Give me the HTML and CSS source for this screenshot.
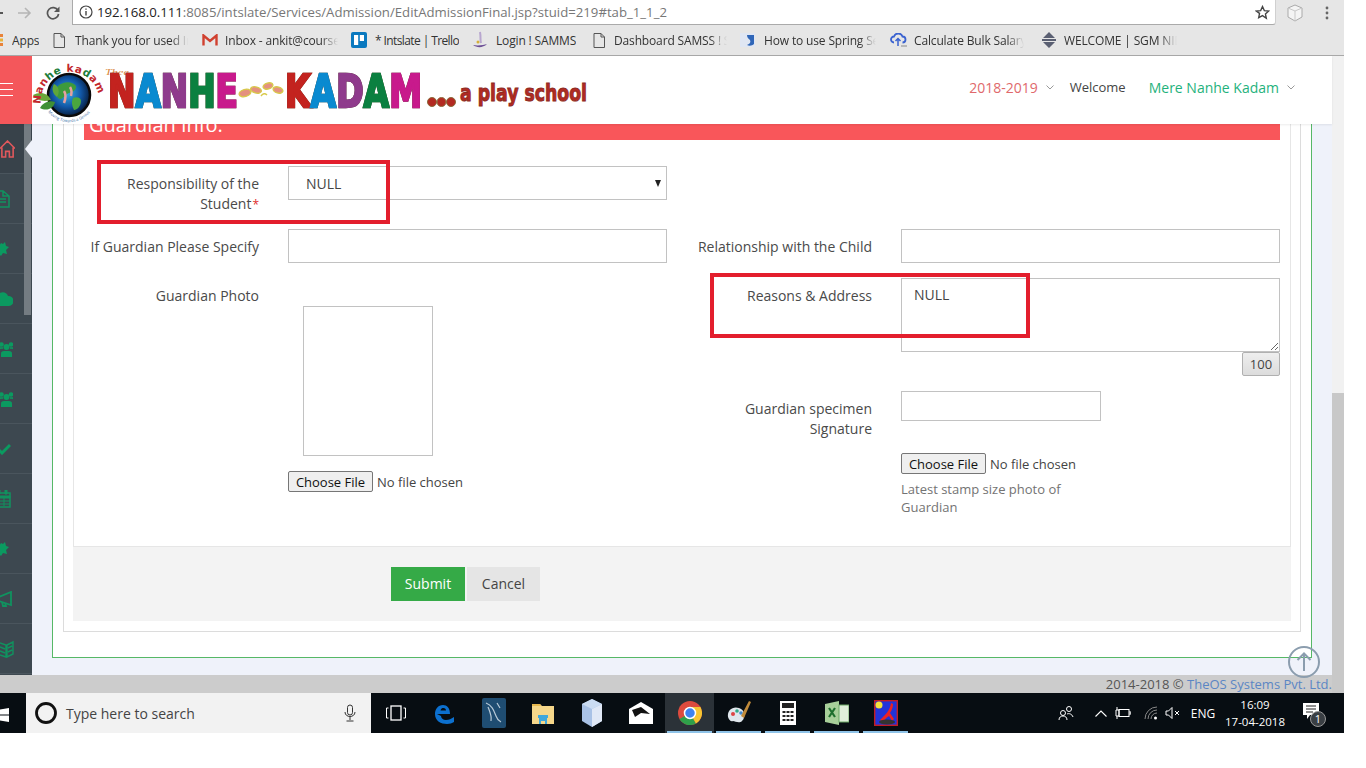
FILE: index.html
```html
<!DOCTYPE html>
<html lang="en">
<head>
<meta charset="utf-8">
<title>Edit Admission</title>
<link rel="stylesheet" href="styles.css">
</head>
<body>
<div class="screen">
  <div class="toolbar">
    <span class="back"></span>
    <svg class="forward" width="14" height="12" viewBox="0 0 14 12"><path d="M0 6h12M7 1l5 5-5 5" fill="none" stroke="#b5b5b5" stroke-width="1.6"/></svg>
    <svg class="reload" width="14" height="14" viewBox="0 0 14 14"><path d="M12 4.5A5.6 5.6 0 1 0 12.6 8" fill="none" stroke="#555" stroke-width="1.7"/><path d="M13.5 0.5v5.5H8z" fill="#555"/></svg>
    <div class="address">
      <svg class="info" width="14" height="14" viewBox="0 0 14 14"><circle cx="7" cy="7" r="6" fill="none" stroke="#444" stroke-width="1.2"/><path d="M7 6v4.4M7 3.4v1.4" stroke="#444" stroke-width="1.4"/></svg>
      <span class="url"><b>192.168.0.111</b>:8085/intslate/Services/Admission/EditAdmissionFinal.jsp?stuid=219#tab_1_1_2</span>
      <svg class="star" width="15" height="15" viewBox="0 0 24 24"><path d="M12 2.5l2.9 6.4 7 .8-5.2 4.7 1.4 6.9L12 17l-6.1 3.3 1.4-6.9L2.1 9.7l7-.8z" fill="none" stroke="#444" stroke-width="2.2"/></svg>
    </div>
    <svg class="ext" width="16" height="18" viewBox="0 0 16 18"><path d="M8 1l7 3v9l-7 4-7-4V4z" fill="#f4f4f4" stroke="#aaa"/><path d="M8 7v10M1 4l7 3 7-3" fill="none" stroke="#c8c8c8"/></svg>
    <svg class="dots" width="4" height="14" viewBox="0 0 4 14"><circle cx="2" cy="2" r="1.4" fill="#666"/><circle cx="2" cy="7" r="1.4" fill="#666"/><circle cx="2" cy="12" r="1.4" fill="#666"/></svg>
  </div>
  <div class="bookmarks">
    <div class="bm bm-apps"><svg width="4" height="12" viewBox="0 0 4 12"><rect y="0" width="3" height="3" fill="#e8833a"/><rect y="4.5" width="3" height="3" fill="#e8b33a"/><rect y="9" width="3" height="3" fill="#e8833a"/></svg><span class="bm-text">Apps</span></div>
    <div class="bm bm-a"><svg width="12" height="15" viewBox="0 0 12 15"><path d="M1 .5h7l3.5 3.5v10.500H1zM8 .5V4h3.500" fill="none" stroke="#555"/></svg><span class="bm-text bm-fade">Thank you for used Ir</span></div>
    <div class="bm bm-b"><svg width="16" height="12" viewBox="0 0 16 12"><path d="M1.500 11.500V1.500L8 7l6.500-5.500v10" fill="none" stroke="#d0402f" stroke-width="2.400"/></svg><span class="bm-text bm-fade">Inbox - ankit@course</span></div>
    <div class="bm bm-c"><svg width="16" height="16" viewBox="0 0 16 16"><rect width="16" height="16" rx="2" fill="#0a79bf"/><rect x="3" y="3" width="4.200" height="10" fill="#fff"/><rect x="8.800" y="3" width="4.200" height="6" fill="#fff"/></svg><span class="bm-text">* Intslate | Trello</span></div>
    <div class="bm bm-d"><svg width="16" height="18" viewBox="0 0 16 18"><path d="M8 1c1 5 0 8 1 11" stroke="#b8a6cf" stroke-width="2" fill="none"/><path d="M1 14c4 3 10 3 14-1-3 1-9 2-14 1z" fill="#6c4f96"/><circle cx="6" cy="11" r="1.500" fill="#d6b03b"/></svg><span class="bm-text">Login ! SAMMS</span></div>
    <div class="bm bm-e"><svg width="12" height="15" viewBox="0 0 12 15"><path d="M1 .5h7l3.5 3.5v10.500H1zM8 .5V4h3.500" fill="none" stroke="#555"/></svg><span class="bm-text bm-fade">Dashboard SAMSS ! S</span></div>
    <div class="bm bm-f"><svg width="16" height="16" viewBox="0 0 16 16"><rect x="0" y="1" width="15" height="14" fill="#dfe6f3"/><path d="M7 3h7v9c-2 2-5 2-7 1 3-1 4-3 3-5-1-1-3-2-3-5z" fill="#2f66b8"/></svg><span class="bm-text bm-fade">How to use Spring Se</span></div>
    <div class="bm bm-g"><svg width="17" height="14" viewBox="0 0 17 14"><path d="M4 9.500a3 3 0 0 1 0-6 4.500 4.500 0 0 1 8.500 0 3 3 0 0 1 0 6" fill="none" stroke="#3a62d0" stroke-width="1.800"/><path d="M8 13V6M5.500 8L8 5.500 10.500 8" fill="none" stroke="#3a62d0" stroke-width="1.500"/><path d="M11 13h6" stroke="#888"/></svg><span class="bm-text bm-fade">Calculate Bulk Salary</span></div>
    <div class="bm bm-h"><svg width="14" height="16" viewBox="0 0 14 16"><path d="M7 0l6 6H1zM7 16l-6-6h12z" fill="#5a5f72"/><rect x="0" y="7" width="14" height="2" fill="#5a5f72"/></svg><span class="bm-text bm-fade">WELCOME | SGM NID</span></div>
  </div>

  <div class="app">
    <div class="app-col">
      <header class="topbar">
        <div class="burger"><i></i><i></i><i></i></div>
        <svg class="logo" width="570" height="68" viewBox="0 0 570 68">
          <defs>
            <radialGradient id="globe" cx="45%" cy="45%" r="60%"><stop offset="0" stop-color="#37b0e0"/><stop offset=".55" stop-color="#1258a8"/><stop offset="1" stop-color="#04142e"/></radialGradient>
            <path id="arcTop" d="M9 48A29 29 0 0 1 67 42"/>
            <path id="arcBottom" d="M16 56a27 27 0 0 0 43 -1"/>
          </defs>
          <g transform="translate(0 3)">
            <circle cx="37" cy="36" r="21" fill="url(#globe)" stroke="#0a0a0a" stroke-width="2.500"/>
            <path d="M26 27c6-5 14-5 18 0 1 5-5 6-9 8-4 3-6 7-9 4-3-4-3-8 0-12z" fill="#3d9a3c"/>
            <path d="M41 39c4-2 8 0 8 3 0 5-4 9-7 9-2-4-3-8-1-12z" fill="#4aa63f"/>
            <path d="M32 32c2 3 2 7 0 12M38 28c2 3 2 5 1 9" stroke="#e6a0a0" stroke-width="2.500" fill="none"/>
            <path d="M1 36c7-4 15-2 18 5-7 2-14 1-18-5z" fill="#6aa83a"/>
            <path d="M8 49c3-6 10-8 15-6-1 6-8 10-15 6z" fill="#3f8f35"/>
            <path d="M22 25c5 2 6 8 3 13-4-3-6-8-3-13z" fill="#5fa63a"/>
          </g>
          <text class="arc-text"><textPath href="#arcTop"><tspan fill="#c2272d">Nan</tspan><tspan fill="#1d7d3a">he </tspan><tspan fill="#c2272d">ka</tspan><tspan fill="#1d7d3a">d</tspan><tspan fill="#c2272d">am</tspan></textPath></text>
          <text class="arc-small"><textPath href="#arcBottom">Moving Towards a Genius World</textPath></text>
          <text class="the" x="73" y="19" textLength="24" lengthAdjust="spacingAndGlyphs">Thee</text>
          <text class="big" y="51" textLength="130" lengthAdjust="spacingAndGlyphs" x="76"><tspan fill="#c3231f" stroke="#c3231f">N</tspan><tspan fill="#0a8ad0" stroke="#0a8ad0">A</tspan><tspan fill="#8f3b8c" stroke="#8f3b8c">N</tspan><tspan fill="#0b8040" stroke="#0b8040">H</tspan><tspan fill="#c81a8c" stroke="#c81a8c">E</tspan></text>
          <g fill="#e4917f" stroke="#d8c94a" stroke-width="1.400">
            <ellipse cx="213" cy="37" rx="6" ry="3.500" transform="rotate(-15 213 37)"/>
            <ellipse cx="224" cy="34" rx="5.500" ry="3" transform="rotate(15 224 34)"/>
            <path d="M229 40q3-4 6-1" fill="none"/>
            <ellipse cx="236" cy="30" rx="5" ry="3" transform="rotate(-15 236 30)"/>
            <ellipse cx="246" cy="34" rx="5" ry="3" transform="rotate(15 246 34)"/>
          </g>
          <text class="big" y="51" textLength="137" lengthAdjust="spacingAndGlyphs" x="253"><tspan fill="#c3231f" stroke="#c3231f">K</tspan><tspan fill="#0a8ad0" stroke="#0a8ad0">A</tspan><tspan fill="#8f3b8c" stroke="#8f3b8c">D</tspan><tspan fill="#0b8040" stroke="#0b8040">A</tspan><tspan fill="#c81a8c" stroke="#c81a8c">M</tspan></text>
          <g fill="#b32a22" stroke="#8d6a3a"><circle cx="400" cy="46" r="4.500"/><circle cx="409.500" cy="46" r="4.500"/><circle cx="419" cy="46" r="4.500"/></g>
          <text class="tag" x="428" y="45" textLength="127" lengthAdjust="spacingAndGlyphs">a play school</text>
        </svg>
        <nav class="topnav">
          <span class="nav-year">2018-2019</span>
          <svg class="chev" width="8" height="5" viewBox="0 0 8 5"><path d="M.5.5L4 4 7.500.5" fill="none" stroke="#999"/></svg>
          <span class="nav-welcome">Welcome</span>
          <span class="nav-user">Mere Nanhe Kadam</span>
          <svg class="chev" width="8" height="5" viewBox="0 0 8 5"><path d="M.5.5L4 4 7.500.5" fill="none" stroke="#999"/></svg>
        </nav>
      </header>

      <div class="body-row">
        <aside class="sidebar">
          <div class="side-item active"><svg width="15" height="18" viewBox="1 1 16 19"><path d="M1 10L9 2l8 8M3 9v10h4v-6h4v6h4V9" fill="none" stroke="#e0585c" stroke-width="1.700"/></svg></div>
          <div class="side-item"><svg width="10" height="18" viewBox="8 0 10 18"><path d="M1 1h10l6 5v11H1zM11 1v5h6M5 9h9M5 12h9" fill="none" stroke="#10925f" stroke-width="1.500"/></svg></div>
          <div class="side-item"><svg width="9" height="16" viewBox="9 0 9 16"><path d="M8 5l2-3 2 1 2-2 1 4 3 1-3 3 1 4-4-1-2 3-2-2-3 1V6z" fill="#0b9a60"/></svg></div>
          <div class="side-item"><svg width="13" height="14" viewBox="7 0 13 14"><path d="M4 14a4 4 0 0 1-.5-8A6 6 0 0 1 15 4a5 5 0 0 1 1 10z" fill="#0b9a60"/></svg></div>
          <div class="side-item"><svg width="13" height="16" viewBox="0 0 13 16"><circle cx="6.500" cy="6" r="3" fill="#0b9a60"/><circle cx="11" cy="3.500" r="2.300" fill="#0b9a60"/><circle cx="1.500" cy="3.500" r="2.300" fill="#0b9a60"/><path d="M1 16v-3.500Q1 10 4 10h5q3 0 3 2.500V16z" fill="#0b9a60"/><path d="M-1 11v-2q0-2 2-2h2M14 11V9q0-2-2-2h-2" stroke="#0b9a60" stroke-width="1.500" fill="none"/></svg></div>
          <div class="side-item"><svg width="13" height="16" viewBox="0 0 13 16"><circle cx="6.500" cy="6" r="3" fill="#0b9a60"/><circle cx="11" cy="3.500" r="2.300" fill="#0b9a60"/><circle cx="1.500" cy="3.500" r="2.300" fill="#0b9a60"/><path d="M1 16v-3.500Q1 10 4 10h5q3 0 3 2.500V16z" fill="#0b9a60"/><path d="M-1 11v-2q0-2 2-2h2M14 11V9q0-2-2-2h-2" stroke="#0b9a60" stroke-width="1.500" fill="none"/></svg></div>
          <div class="side-item"><svg width="11" height="12" viewBox="0 0 11 12"><path d="M-2 6l4 4 8-8" fill="none" stroke="#0b9a60" stroke-width="3"/></svg></div>
          <div class="side-item"><svg width="11" height="18" viewBox="7 0 11 18"><rect x="1" y="3" width="16" height="14" fill="none" stroke="#10925f" stroke-width="1.500"/><path d="M1 6h16v2H1zM5 0h2v4H5zM12 0h2v4h-2zM1 11h16M1 14h16M6 8v8M11 8v8" fill="#10925f" stroke="#10925f"/></svg></div>
          <div class="side-item"><svg width="9" height="16" viewBox="9 0 9 16"><path d="M8 5l2-3 2 1 2-2 1 4 3 1-3 3 1 4-4-1-2 3-2-2-3 1V6z" fill="#0b9a60"/></svg></div>
          <div class="side-item"><svg width="12" height="16" viewBox="6 0 12 16"><path d="M5 6l12-5v13L5 10zM8 11l1 4h3l-1-3" fill="none" stroke="#10925f" stroke-width="1.800"/></svg></div>
          <div class="side-item"><svg width="14" height="18" viewBox="0 0 14 18"><path d="M0 3l6 2v12l-6-2M7 5l6-3v12l-6 3zM0 7l5 2M0 11l5 2M8 8l4-2M8 12l4-2" fill="none" stroke="#10925f" stroke-width="1.400"/></svg></div>
          <span class="side-scroll"></span>
          <span class="side-arrow"></span>
        </aside>

        <main class="main">
          <div class="green-box">
            <div class="gray-box">
              <div class="panel">
                <form class="form-area">
                  <h2 class="section-title">Guardian Info.</h2>
                  <div class="form-grid">
                    <div class="field">
                      <label class="label">Responsibility of the Student<em>*</em></label>
                      <div class="select-wrap">
                        <select class="control control-select"><option>NULL</option></select>
                      </div>
                    </div>
                    <div class="field"></div>
                    <div class="field">
                      <label class="label">If Guardian Please Specify</label>
                      <input class="control" type="text">
                    </div>
                    <div class="field">
                      <label class="label">Relationship with the Child</label>
                      <input class="control" type="text">
                    </div>
                    <div class="field field-last">
                      <label class="label">Guardian Photo</label>
                      <div class="photo-col">
                        <div class="photo-box"></div>
                        <input class="file" type="file">
                      </div>
                    </div>
                    <div class="right-stack">
                      <div class="field">
                        <label class="label">Reasons &amp; Address</label>
                        <div class="area-col">
                          <textarea class="control area">NULL</textarea>
                          <span class="counter">100</span>
                        </div>
                      </div>
                      <div class="field field-sign">
                        <label class="label">Guardian specimen Signature</label>
                        <input class="control control-sign" type="text">
                      </div>
                      <div class="field field-last">
                        <span class="label"></span>
                        <div class="sign-col">
                          <input class="file" type="file">
                          <p class="help">Latest stamp size photo of Guardian</p>
                        </div>
                      </div>
                    </div>
                  </div>
                </form>
                <div class="actions">
                  <button class="btn btn-submit" type="button">Submit</button>
                  <button class="btn btn-cancel" type="button">Cancel</button>
                </div>
              </div>
            </div>
          </div>
        </main>
      </div>

      <footer class="copy">2014-2018 © <a>TheOS Systems Pvt. Ltd.</a></footer>
    </div>
    <div class="page-scroll"><span class="page-thumb"></span></div>
    <span class="mark mark-one"></span>
    <span class="mark mark-two"></span>
    <svg class="to-top" width="34" height="34" viewBox="0 0 34 34"><circle cx="17" cy="17" r="15" fill="none" stroke="#8b9dae" stroke-width="2"/><path d="M17 26V9M10.500 15L17 8.500 23.500 15" fill="none" stroke="#8b9dae" stroke-width="2"/></svg>
  </div>

  <div class="taskbar">
    <svg class="win" width="10" height="14" viewBox="0 0 10 14"><path d="M0 1.500L9 0v6.500H0zM0 7.500h9V14L0 12.500z" fill="#fff"/></svg>
    <div class="search">
      <svg class="cortana" width="22" height="22" viewBox="0 0 22 22"><circle cx="11" cy="11" r="9.500" fill="none" stroke="#111" stroke-width="2.800"/></svg>
      <span class="search-text">Type here to search</span>
      <svg class="mic" width="12" height="18" viewBox="0 0 12 18"><rect x="3.500" y="1" width="5" height="10" rx="2.500" fill="none" stroke="#333"/><path d="M1 8c0 6 10 6 10 0M6 13v3M2.500 17h7" fill="none" stroke="#333"/></svg>
    </div>
    <div class="apps">
      <div class="tb"><svg width="20" height="16" viewBox="0 0 20 16"><rect x="5" y="1" width="10" height="14" fill="none" stroke="#fff" stroke-width="1.300"/><path d="M2.500 3H.5v10h2M17.500 3h2v10h-2" fill="none" stroke="#fff"/></svg></div>
      <div class="tb"><svg width="21" height="24" viewBox="0 0 21 24"><path d="M3 13h13c0-6-3-9-7-9C4 4 1 8 1 13c0 7 6 10 12 10 3 0 5-1 7-2v-5c-3 2-5 3-8 3-3 0-5-2-5-4zM6.500 9.500C7 7.500 8 7 9.500 7s2.500 1 2.500 2.500z" fill="#0c70cf" fill-rule="evenodd"/></svg></div>
      <div class="tb"><svg width="24" height="30" viewBox="0 0 24 30"><rect width="24" height="30" rx="2" fill="#1f4d72"/><path d="M4 5c6 2 8 8 10 13 1 3 3 5 5 6M6 9c2 5 4 9 3 14M15 5l3 5" fill="none" stroke="#b8cad8" stroke-width="1.200"/></svg></div>
      <div class="tb"><svg width="22" height="24" viewBox="0 0 22 24"><path d="M0 3h8l2 2h12v18H0z" fill="#f5d78a"/><path d="M0 3h8l1 2H0z" fill="#e6b84f"/><path d="M7 16h8v7h-2v-3H9v3H7z" fill="#3fa7dc"/><rect x="6" y="14" width="10" height="3" fill="#3fa7dc"/></svg></div>
      <div class="tb"><svg width="22" height="28" viewBox="0 0 22 28"><path d="M11 0l10 5v17l-10 6-10-6V5z" fill="#a9c2e6"/><path d="M11 10v18l10-6V5z" fill="#e0e8f6"/><path d="M1 5l10-5 10 5-10 5z" fill="#cbdcf2"/></svg></div>
      <div class="tb"><svg width="24" height="22" viewBox="0 0 24 22"><path d="M0 7L12 0l12 7v15H0z" fill="#fff"/><path d="M3 8l9-3 9 7-9-1-6 4z" fill="#111"/></svg></div>
      <div class="tb tb-active tb-run"><svg width="24" height="24" viewBox="0 0 24 24"><circle cx="12" cy="12" r="12" fill="#dd4b3e"/><path d="M12 12L1.500 18A12 12 0 0 0 18 22.400z" fill="#2fa04a"/><path d="M12 12l6 10.400A12 12 0 0 0 22.400 6H12z" fill="#f7c532"/><circle cx="12" cy="12" r="5.500" fill="#3f83ef" stroke="#fff" stroke-width="1.500"/></svg></div>
      <div class="tb tb-run"><svg width="26" height="28" viewBox="0 0 26 28"><path d="M2 18C1 11 7 7 13 9c6 2 7 9 3 13-3 3-7 0-9 0-2 1-4-1-5-4z" fill="#dfe6ec"/><circle cx="7" cy="15" r="2" fill="#d44"/><circle cx="11" cy="12" r="1.800" fill="#3a8"/><circle cx="15" cy="14" r="1.800" fill="#48c"/><path d="M15 17L23 2l2 1-7 16z" fill="#c08a3a"/></svg></div>
      <div class="tb tb-run"><svg width="16" height="24" viewBox="0 0 16 24"><rect width="16" height="24" fill="#fff"/><rect x="2" y="2" width="12" height="5" fill="#222"/><path d="M2.500 10h3v2h-3zM6.500 10h3v2h-3zM10.500 10h3v2h-3zM2.500 14h3v2h-3zM6.500 14h3v2h-3zM10.500 14h3v2h-3zM2.500 18h3v2h-3zM6.500 18h3v2h-3zM10.500 18h3v2h-3z" fill="#222"/></svg></div>
      <div class="tb tb-run"><svg width="24" height="24" viewBox="0 0 24 24"><path d="M0 3l14-3v24L0 21z" fill="#a8cf9a"/><rect x="14" y="4" width="10" height="17" fill="#dfeeda" stroke="#6aa864"/><path d="M4 7l6 9M10 7l-6 9" stroke="#1e6f2e" stroke-width="2.200"/></svg></div>
      <div class="tb tb-run"><svg width="24" height="26" viewBox="0 0 24 26"><rect x=".7" y=".7" width="22.600" height="24.600" fill="#2233d8" stroke="#c21c22" stroke-width="1.400"/><circle cx="5" cy="5" r="3.500" fill="#f5e03a"/><path d="M17 3c-1 8-6 12-11 17l3 2c2-3 4-5 6-6l3 5 2-2-4-6c2-3 3-6 3-9z" fill="#e22"/><ellipse cx="13" cy="22" rx="8" ry="2.500" fill="#333"/></svg></div>
    </div>
    <div class="tray">
      <svg class="t-people" width="16" height="16" viewBox="0 0 16 16"><circle cx="5" cy="8" r="2.500" fill="none" stroke="#fff"/><path d="M1 15c0-3 2-4 4-4s4 1 4 4" fill="none" stroke="#fff"/><circle cx="11" cy="4" r="2.500" fill="none" stroke="#fff"/><path d="M9 9c2-1 5 0 6 3" fill="none" stroke="#fff"/></svg>
      <svg class="t-up" width="12" height="7" viewBox="0 0 12 7"><path d="M.5 6.500L6 1l5.500 5.500" fill="none" stroke="#fff" stroke-width="1.100"/></svg>
      <svg class="t-batt" width="16" height="12" viewBox="0 0 16 12"><rect x="4" y="2.500" width="10" height="7" fill="none" stroke="#fff"/><path d="M14 5h2v2h-2M1 3h3v6H1zM2 0v3M2 9v3" fill="none" stroke="#fff"/></svg>
      <svg class="t-wifi" width="14" height="14" viewBox="0 0 14 14"><path d="M1 13A12 12 0 0 1 13 1M4 13a9 9 0 0 1 9-9M7 13a6 6 0 0 1 6-6" fill="none" stroke="#888"/><circle cx="11.500" cy="12" r="1.500" fill="#fff"/></svg>
      <svg class="t-vol" width="16" height="14" viewBox="0 0 16 14"><path d="M1 5h2.500L7 1.500v11L3.500 9H1z" fill="none" stroke="#fff"/><path d="M10 5l4 4M14 5l-4 4" stroke="#fff"/></svg>
      <span class="t-eng">ENG</span>
      <div class="t-clock"><span>16:09</span><span>17-04-2018</span></div>
      <div class="t-note">
        <svg width="16" height="16" viewBox="0 0 16 16"><path d="M0 0h16v12H7l-3 4v-4H0z" fill="#fff"/><path d="M3 3h10M3 6h10M3 9h7" stroke="#222"/></svg>
        <span class="note-badge">1</span>
      </div>
    </div>
  </div>
</div>
</body>
</html>
```
FILE: styles.css
```css
* { box-sizing: border-box; }
html, body { margin: 0; padding: 0; background: #fff; }
body { width: 1366px; height: 768px; overflow: hidden; font-family: "Open Sans", sans-serif; font-size: 14px; color: #444; }

.screen { width: 1344px; height: 733px; display: flex; flex-direction: column; }

/* browser chrome */
.toolbar { height: 25px; background: #e6e6e6; display: flex; align-items: center; flex: none; }
.back { width: 3px; height: 2px; background: #555; flex: none; }
.forward { margin-left: 15px; flex: none; }
.reload { margin-left: 14px; flex: none; }
.address { margin-left: 12px; width: 1204px; height: 25px; background: #fff; border-left: 1px solid #aaa; border-bottom: 1px solid #aaa; border-right: 1px solid #d0d0d0; border-bottom-right-radius: 3px; display: flex; align-items: center; flex: none; }
.info { margin-left: 6px; flex: none; }
.url { margin-left: 4px; font-size: 13.200px; color: #777; white-space: nowrap; }
.url b { font-weight: 400; color: #222; }
.star { margin-left: auto; margin-right: 5px; }
.ext { margin-left: 11px; flex: none; }
.dots { margin-left: 22px; flex: none; }

.bookmarks { height: 31px; background: #e6e6e6; border-bottom: 1px solid #a8a8a8; display: flex; align-items: center; flex: none; }
.bm { display: flex; align-items: center; flex: none; height: 100%; }
.bm svg { flex: none; }
.bm-text { font-size: 12px; letter-spacing: -.15px; color: #333; white-space: nowrap; overflow: hidden; display: block; }
.bm-fade { -webkit-mask-image: linear-gradient(90deg, #000 85%, transparent); mask-image: linear-gradient(90deg, #000 85%, transparent); }
.bm-apps { width: 53px; }
.bm-apps svg { margin-right: 8px; }
.bm-a { width: 149px; }
.bm-a svg { margin-right: 10px; }
.bm-a .bm-text { width: 113px; }
.bm-b { width: 149px; }
.bm-b svg { margin-right: 7px; }
.bm-b .bm-text { width: 113px; }
.bm-c { width: 121px; }
.bm-c svg { margin-right: 8px; }
.bm-c .bm-text { letter-spacing: -.6px; }
.bm-d { width: 121px; }
.bm-d svg { margin-right: 8px; }
.bm-e { width: 147px; }
.bm-e svg { margin-right: 9px; }
.bm-e .bm-text { width: 113px; }
.bm-f { width: 150px; }
.bm-f svg { margin-right: 8px; }
.bm-f .bm-text { width: 112px; }
.bm-g { width: 152px; }
.bm-g svg { margin-right: 7px; }
.bm-g .bm-text { width: 110px; }
.bm-h svg { margin-right: 8px; }
.bm-h .bm-text { width: 113px; }

/* app */
.app { flex: 1; display: flex; position: relative; min-height: 0; }
.app-col { width: 1332px; display: flex; flex-direction: column; background: #ccc; }
.topbar { height: 68px; flex: none; background: #fff; display: flex; align-items: center; position: relative; z-index: 2; box-shadow: 0 1px 2px rgba(0,0,0,.08); }
.burger { width: 32px; height: 68px; background: #f4575b; display: flex; flex-direction: column; gap: 5px; padding-top: 27px; flex: none; }
.burger i { display: block; width: 13px; height: 1px; background: #fff; }
.logo { flex: none; }
.arc-text { font: 700 10.500px "DejaVu Sans", sans-serif; letter-spacing: .6px; }
.arc-small { font: 400 4px "Open Sans", sans-serif; fill: #3a6ea8; }
.the { font: italic 400 9px "Liberation Serif", serif; fill: #d8853a; }
.big { font: 700 44px "DejaVu Sans", sans-serif; stroke-width: 2.400; filter: drop-shadow(0 0 .6px #4b3a20); }
.tag { font: 700 23px "DejaVu Sans", sans-serif; fill: #b32a22; stroke: #8d2a22; stroke-width: 1; }
.topnav { margin-left: auto; padding-right: 37px; padding-bottom: 6px; display: flex; align-items: center; font-size: 14px; white-space: nowrap; }
.nav-year { color: #e0696c; }
.chev { margin-left: 8px; flex: none; }
.nav-welcome { margin-left: 16px; font-size: 13px; color: #444; }
.nav-user { margin-left: 23px; color: #1fb27c; }

.body-row { height: 551px; flex: none; display: flex; }
.sidebar { width: 32px; flex: none; background: #3d4850; position: relative; overflow: hidden; }
.side-item { height: 50px; display: flex; align-items: center; border-bottom: 1px solid #4a555d; overflow: hidden; }
.side-item.active { background: #38424a; }
.side-scroll { position: absolute; left: 24px; top: 0; width: 7px; height: 191px; background: #747c82; }
.side-arrow { position: absolute; right: 0; top: 16px; width: 0; height: 0; border-top: 9px solid transparent; border-bottom: 9px solid transparent; border-right: 7px solid #eff2fa; }

.main { flex: 1; background: #eff2fa; padding: 0 21px 17px 20px; min-width: 0; overflow: hidden; display: flex; }
.green-box { flex: 1; background: #fff; border: 1px solid #56b866; border-top: 0; padding: 0 10px 25px; display: flex; }
.gray-box { flex: 1; border: 1px solid #dcdcdc; border-top: 0; padding: 0 9px 10px; display: flex; }
.panel { flex: 1; display: flex; flex-direction: column; }
.form-area { flex: 1; border: 1px solid #e6e6e6; border-top: 0; padding: 0 10px; background: #fff; }
.section-title { margin: -24px 0 26px; height: 40px; padding: 0 5px 5px; background: #f9565a; color: #fff; font-size: 20px; font-weight: 400; line-height: 20px; display: flex; align-items: flex-end; }
.form-grid { display: grid; grid-template-columns: 583px 583px; column-gap: 30px; align-items: start; }
.field { display: flex; align-items: flex-start; gap: 29px; margin-bottom: 15px; }
.field-last { margin-bottom: 0; }
.label { width: 175px; flex: none; padding-top: 8px; text-align: right; line-height: 20px; font-size: 14px; color: #4a4a4a; }
.label em { color: #e02b2b; font-size: 12px; line-height: 1; font-style: normal; margin-left: 1px; }
.control { display: block; width: 379px; height: 34px; padding: 6px 17px; border: 1px solid #c2c2c2; background: #fff; font: 14px "Open Sans", sans-serif; color: #444; border-radius: 0; outline: 0; flex: none; }
.select-wrap { position: relative; flex: none; }
.select-wrap::after { content: ""; position: absolute; right: 6px; top: 14px; border-left: 3.500px solid transparent; border-right: 3.500px solid transparent; border-top: 7px solid #222; }
.control-select { appearance: none; -webkit-appearance: none; padding-left: 17px; }
.right-stack { display: flex; flex-direction: column; }
.area-col { display: flex; flex-direction: column; align-items: flex-end; flex: none; }
.area { height: 74px; padding: 6px 12px; resize: vertical; }
.counter { width: 38px; height: 24px; line-height: 22px; text-align: center; font-size: 13px; color: #444; background: linear-gradient(#eee, #dcdcdc); border: 1px solid #b0b0b0; border-radius: 2px; }
.field-sign { margin-bottom: 14px; }
.control-sign { width: 200px; height: 30px; }
.photo-col { display: flex; flex-direction: column; }
.photo-box { width: 130px; height: 150px; margin: 28px 0 15px 15px; border: 1px solid #c2c2c2; }
.file { display: block; width: 260px; height: 21px; font: 13px "Open Sans", sans-serif; color: #444; }
.file::file-selector-button { width: 85px; height: 21px; margin-right: 4px; padding: 0; font: 13px "Open Sans", sans-serif; color: #111; background: #efefef; border: 1px solid #767676; border-radius: 2px; }
.help { margin: 6px 0 0; width: 200px; font-size: 13px; line-height: 18px; color: #737373; }
.actions { height: 74px; flex: none; background: #f3f3f3; padding: 20px 0 20px 318px; display: flex; gap: 2px; }
.btn { height: 34px; border: 0; font: 14px "Open Sans", sans-serif; padding: 0 0 2px; }
.btn-submit { width: 74px; background: #35aa47; color: #fff; }
.btn-cancel { width: 73px; background: #e5e5e5; color: #444; }

.copy { flex: 1; text-align: right; font-size: 13px; line-height: 18px; color: #555; }
.copy a { color: #5b86c4; }

.page-scroll { width: 12px; background: #f1f1f1; display: flex; flex-direction: column; justify-content: flex-end; }
.page-thumb { display: block; height: 300px; background: #c8c8c8; }

.mark { position: absolute; border: 4px solid #e31e2d; z-index: 3; }
.mark-one { left: 97px; top: 104px; width: 293px; height: 64px; }
.mark-two { left: 710px; top: 217px; width: 320px; height: 65px; }
.to-top { position: absolute; left: 1287px; top: 589px; z-index: 3; }

/* taskbar */
.taskbar { height: 40px; flex: none; background: #070d12; display: flex; align-items: center; color: #fff; }
.win { flex: none; width: 16px; padding-right: 6px; margin-right: 10px; margin-top: 3px; }
.search { width: 345px; height: 40px; flex: none; background: #f2f2f2; display: flex; align-items: center; }
.cortana { margin-left: 9px; flex: none; }
.search-text { margin-left: 9px; font-size: 14px; color: #444; }
.mic { margin-left: auto; margin-right: 15px; flex: none; }
.apps { display: flex; height: 40px; flex: none; }
.tb { width: 49px; height: 40px; display: flex; align-items: center; justify-content: center; flex: none; position: relative; }
.tb-active { background: #2b3238; }
.tb-run::after { content: ""; position: absolute; left: 2px; right: 2px; bottom: 0; height: 2px; background: #8fc3e8; }
.tray { flex: 1; display: flex; align-items: center; height: 40px; }
.tray > * { flex: none; }
.t-people { margin-left: 148px; }
.t-up { margin-left: 21px; }
.t-batt { margin-left: 8px; }
.t-wifi { margin-left: 13px; }
.t-vol { margin-left: 7px; }
.t-eng { margin-left: 5px; width: 34px; text-align: center; font-size: 12px; }
.t-clock { margin-left: 1px; width: 68px; display: flex; flex-direction: column; align-items: center; font-size: 11.500px; line-height: 17px; }
.t-note { margin-left: 14px; position: relative; width: 24px; height: 24px; }
.t-note svg { position: absolute; left: 0; top: 2px; }
.note-badge { position: absolute; left: 7px; top: 10px; width: 16px; height: 16px; border-radius: 50%; background: #3a3f44; border: 1px solid #999; font-size: 11px; line-height: 14px; text-align: center; color: #fff; }
```
